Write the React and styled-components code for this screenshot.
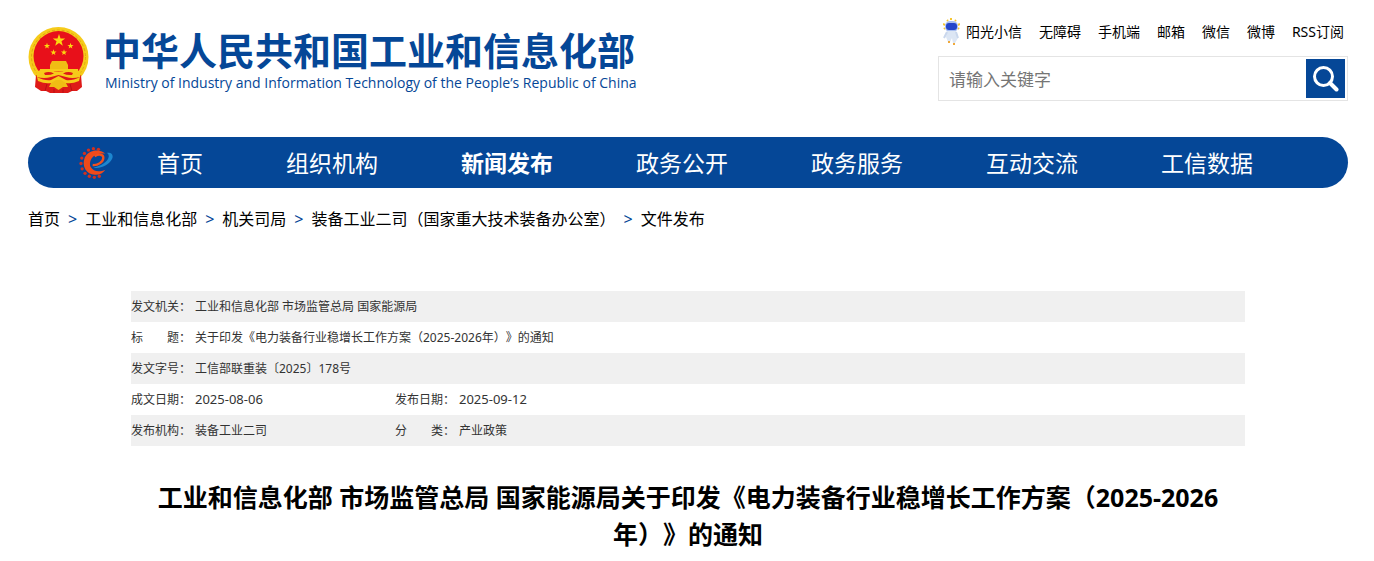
import React, { useState } from 'react';
import styled, { createGlobalStyle } from 'styled-components';

const BLUE = '#054797';

const GlobalStyle = createGlobalStyle`
  * {
    box-sizing: border-box;
  }

  body {
    margin: 0;
    background: #fff;
    color: #000;
    font-family: "Noto Sans", "Noto Sans CJK SC", sans-serif;
    font-size: 14px;
    text-spacing-trim: space-all;
  }

  a {
    color: inherit;
    text-decoration: none;
  }
`;

const Page = styled.div`
  padding: 0 26px 0 28px;
`;

const Header = styled.header`
  display: flex;
  justify-content: space-between;
  align-items: flex-start;
  padding-top: 20px;
`;

const Brand = styled.a`
  display: flex;
  gap: 14px;
  padding-top: 7px;
  color: ${BLUE};
`;

const Emblem = styled.svg`
  width: 61px;
  height: 67px;
  flex: none;
`;

const BrandText = styled.div`
  display: flex;
  flex-direction: column;
  gap: 4px;
  padding-top: 2px;
`;

const BrandName = styled.span`
  font-family: "Noto Sans CJK SC", sans-serif;
  font-size: 38px;
  font-weight: 700;
  line-height: 40px;
  white-space: nowrap;
`;

const BrandSub = styled.span`
  padding-left: 2px;
  font-family: "Open Sans", sans-serif;
  font-size: 14px;
  font-weight: 500;
  line-height: 20px;
  white-space: nowrap;
`;

const Tools = styled.div`
  width: 410px;
  display: flex;
  flex-direction: column;
  gap: 14px;
`;

const TopLinks = styled.nav`
  display: flex;
  align-items: center;
  justify-content: flex-end;
  gap: 17px;
  height: 22px;
  padding-right: 4px;
  white-space: nowrap;
`;

const RobotLink = styled.a`
  display: flex;
  align-items: center;
  gap: 6px;
`;

const RobotIcon = styled.svg`
  width: 17px;
  height: 27px;
`;

const SearchForm = styled.form`
  display: flex;
  height: 45px;
  padding: 2px;
  border: 1px solid #e4e4e4;
`;

const SearchInput = styled.input`
  flex: 1;
  min-width: 0;
  border: 0;
  outline: 0;
  padding: 2px 8px 0;
  font-family: inherit;
  font-size: 17px;

  &::placeholder {
    color: #757575;
  }
`;

const SearchButton = styled.button`
  display: flex;
  align-items: center;
  justify-content: center;
  width: 39px;
  height: 39px;
  padding: 0;
  border: 0;
  background: ${BLUE};
  cursor: pointer;
`;

const NavBar = styled.nav`
  display: flex;
  align-items: center;
  gap: 44px;
  height: 51px;
  margin-top: 36px;
  padding: 0 51px;
  border-radius: 26px;
  background: ${BLUE};
`;

const NavLogo = styled.svg`
  width: 34px;
  height: 34px;
  flex: none;
`;

const NavList = styled.ul`
  display: flex;
  gap: 83px;
  margin: 0;
  padding: 0;
  list-style: none;
`;

const NavLink = styled.a`
  color: #fff;
  font-size: 23px;
  font-weight: ${(props) => (props.$active ? 700 : 400)};
  line-height: 48px;
  white-space: nowrap;
`;

const Crumbs = styled.ol`
  display: flex;
  margin: 0;
  padding: 18px 0 0;
  list-style: none;
  font-size: 16px;
  line-height: 26px;
  white-space: nowrap;
`;

const Crumb = styled.li`
  & + &::before {
    content: '>';
    margin: 0 8px;
    color: ${BLUE};
  }
`;

const Article = styled.main`
  padding: 59px 103px 0;
`;

const InfoTable = styled.table`
  width: 100%;
  border-collapse: collapse;
  table-layout: fixed;
  color: #333;
  font-size: 12px;

  tr:nth-child(odd) {
    background: #f0f0f0;
  }
`;

const Label = styled.th`
  height: 31px;
  padding: 0 0 2px;
  font-weight: 400;
  text-align: left;
  white-space: nowrap;
`;

const Value = styled.td`
  padding: 0 0 2px;
`;

const Day = styled.time`
  font-size: 13px;
`;

const Title = styled.h1`
  margin: 0;
  padding: 33px 12px 0;
  font-size: 25px;
  font-weight: 700;
  line-height: 37px;
  text-align: center;
`;

const topLinks = ['无障碍', '手机端', '邮箱', '微信', '微博', 'RSS订阅'];

const navItems = ['首页', '组织机构', '新闻发布', '政务公开', '政务服务', '互动交流', '工信数据'];

const crumbs = ['首页', '工业和信息化部', '机关司局', '装备工业二司（国家重大技术装备办公室）', '文件发布'];

const star = (cx, cy, r) =>
  Array.from({ length: 10 }, (_, i) => {
    const rad = i % 2 ? r * 0.4 : r;
    const a = (Math.PI / 5) * i - Math.PI / 2;
    return `${cx + rad * Math.cos(a)},${cy + rad * Math.sin(a)}`;
  }).join(' ');

function NationalEmblem() {
  return (
    <Emblem viewBox="0 0 61 67" aria-hidden="true">
      <circle cx="30.5" cy="30" r="30" fill="#f6cb1a" />
      <circle cx="30.5" cy="30" r="27" fill="none" stroke="#e0a80f" strokeDasharray="3 2" />
      <circle cx="30.5" cy="29" r="25" fill="#e8101a" />
      <polygon points={star(31, 13.5, 6.5)} fill="#fbd80f" />
      <polygon points={star(19, 19, 3.2)} fill="#fbd80f" />
      <polygon points={star(42.5, 19, 3.2)} fill="#fbd80f" />
      <polygon points={star(25.5, 25.5, 3.2)} fill="#fbd80f" />
      <polygon points={star(36, 25.5, 3.2)} fill="#fbd80f" />
      <path d="M24 34 H38 L40 38 H22Z M22 38 H40 V42 H22Z" fill="#f0bd14" />
      <path d="M12 42 H50 V44 H12Z" fill="#f6cb1a" />
      <path d="M8 48 L7 60 L13 64 L18 64 L22 66 H40 L44 64 L49 64 L54 60 L53 48Z" fill="#de1a18" />
      <path
        d="M8 46 Q14 40 22 43 Q30.5 46 39 43 Q47 40 53 46 L52 50 Q44 52 38 50 L30.5 48 L23 50 Q16 52 9 50Z"
        fill="#f6cb1a"
      />
      <path d="M16 46 Q21 44 26 46.500 Q22 48.500 17 48Z M45 46 Q40 44 35 46.500 Q39 48.500 44 48Z" fill="#de1a18" />
      <path d="M9 50 Q17 54 23 53 L30.5 49 L38 53 Q44 54 52 50 L51 54 Q44 57 38 56 H23 Q17 57 10 54Z" fill="#f6cb1a" />
      <path d="M23 56 L28 53 H33 L38 56 L40 60 L35 60 L30.5 63 L26 60 H21Z" fill="#f0bd14" />
      <path d="M19 57 L17 64 M42 57 L44 64 M26 62 V66 M35 62 V66" stroke="#b80f14" />
    </Emblem>
  );
}

function GearLogo() {
  const teeth = Array.from({ length: 11 }, (_, i) => {
    const a = (Math.PI / 180) * (-72 - i * 22);
    return [55 + 40 * Math.cos(a), 60 + 43 * Math.sin(a)];
  });

  return (
    <NavLogo viewBox="9 9 102 102" aria-hidden="true">
      {teeth.map(([x, y]) => (
        <circle key={`${x}`} cx={x} cy={y} r="5" fill="#d3301f" />
      ))}
      <path
        d="M88 32 C70 16 38 20 26 44 C16 70 32 94 56 95 C70 96 82 90 88 80 C70 88 52 86 44 72 C38 60 46 42 58 36 C70 31 82 31 88 32Z"
        fill="#f04a1a"
      />
      <path d="M50 66 C66 68 82 56 82 44 C82 34 68 32 56 40" fill="none" stroke="#f4501c" strokeWidth="7" />
      <path d="M92 30 C106 26 114 36 108 48 C98 68 72 78 52 74 C74 70 96 56 98 42 C99 35 96 31 92 30Z" fill="#1d86cf" />
    </NavLogo>
  );
}

function Robot() {
  return (
    <RobotIcon viewBox="0 0 17 27" aria-hidden="true">
      <path d="M4 2 L5 3 M8 0 V2 M13 2 L12 3 M0 6 L2 7 M17 6 L15 7 M1 11 L2 10 M16 11 L15 10" stroke="#f5c531" strokeWidth="2" />
      <rect x="2" y="3" width="13" height="11" rx="5" fill="#a9bff0" />
      <rect x="3" y="5" width="11" height="7" rx="3" fill="#2445c9" />
      <path d="M4 13 H13 L15 20 L12 25 H10 L9 20 L7 24 H5 L3 19Z" fill="#dce6f4" />
      <path d="M4 14 L1 20 M13 14 L15 20" stroke="#c9d7ec" strokeWidth="2" />
      <path d="M5 24 H7 M10 26 H12" stroke="#f0a93a" strokeWidth="2" />
    </RobotIcon>
  );
}

function App() {
  const [keyword, setKeyword] = useState('');

  const submit_search = (e) => {
    e.preventDefault();
  };

  return (
    <Page>
      <GlobalStyle />
      <Header>
        <Brand href="#">
          <NationalEmblem />
          <BrandText>
            <BrandName>中华人民共和国工业和信息化部</BrandName>
            <BrandSub>Ministry of Industry and Information Technology of the People’s Republic of China</BrandSub>
          </BrandText>
        </Brand>
        <Tools>
          <TopLinks>
            <RobotLink href="#">
              <Robot />
              阳光小信
            </RobotLink>
            {topLinks.map((text) => (
              <a href="#" key={text}>{text}</a>
            ))}
          </TopLinks>
          <SearchForm onSubmit={submit_search}>
            <SearchInput
              aria-label="请输入关键字"
              placeholder="请输入关键字"
              value={keyword}
              onChange={(e) => setKeyword(e.target.value)}
            />
            <SearchButton type="submit" aria-label="搜索">
              <svg width="27" height="27" viewBox="0 0 27 27" fill="none" stroke="#fff" strokeLinecap="round">
                <circle cx="11.500" cy="11.500" r="9" strokeWidth="3" />
                <path d="M18 18 L24.500 24.500" strokeWidth="4" />
              </svg>
            </SearchButton>
          </SearchForm>
        </Tools>
      </Header>

      <NavBar>
        <GearLogo />
        <NavList>
          {navItems.map((text) => (
            <li key={text}>
              <NavLink href="#" $active={text === '新闻发布'}>{text}</NavLink>
            </li>
          ))}
        </NavList>
      </NavBar>

      <Crumbs>
        {crumbs.map((text) => (
          <Crumb key={text}><a href="#">{text}</a></Crumb>
        ))}
      </Crumbs>

      <Article>
        <InfoTable>
          <colgroup>
            <col width="64" />
            <col width="200" />
            <col width="64" />
            <col />
          </colgroup>
          <tbody>
            <tr>
              <Label scope="row">发文机关：</Label>
              <Value colSpan={3}>工业和信息化部 市场监管总局 国家能源局</Value>
            </tr>
            <tr>
              <Label scope="row">标　　题：</Label>
              <Value colSpan={3}>关于印发《电力装备行业稳增长工作方案（2025-2026年）》的通知</Value>
            </tr>
            <tr>
              <Label scope="row">发文字号：</Label>
              <Value colSpan={3}>工信部联重装〔2025〕178号</Value>
            </tr>
            <tr>
              <Label scope="row">成文日期：</Label>
              <Value><Day>2025-08-06</Day></Value>
              <Label scope="row">发布日期：</Label>
              <Value><Day>2025-09-12</Day></Value>
            </tr>
            <tr>
              <Label scope="row">发布机构：</Label>
              <Value>装备工业二司</Value>
              <Label scope="row">分　　类：</Label>
              <Value>产业政策</Value>
            </tr>
          </tbody>
        </InfoTable>
        <Title>工业和信息化部 市场监管总局 国家能源局关于印发《电力装备行业稳增长工作方案（2025-2026年）》的通知</Title>
      </Article>
    </Page>
  );
}

export default App;
